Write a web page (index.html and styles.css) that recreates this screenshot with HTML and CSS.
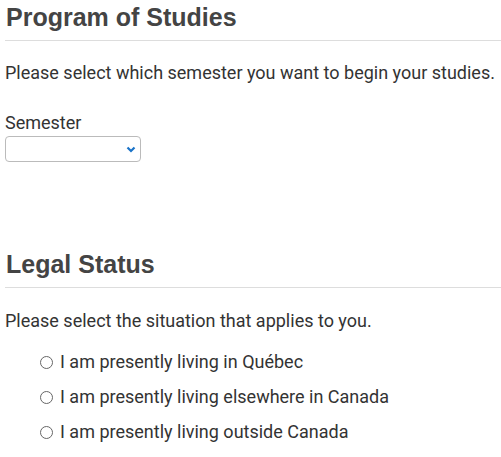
FILE: index.html
```html
<!DOCTYPE html>
<html>
<head>
<meta charset="utf-8">
<link rel="stylesheet" href="styles.css">
</head>
<body>
<section class="section">
  <h2 class="title">Program of Studies</h2>
  <p class="text">Please select which semester you want to begin your studies.</p>
  <div class="field">
    <label class="label">Semester</label>
    <div class="select">
      <svg class="chev" width="10" height="7" viewBox="0 0 10 7"><path d="M1.5 1.5 L5 5 L8.5 1.5" fill="none" stroke="#1a73c8" stroke-width="2.2"/></svg>
    </div>
  </div>
</section>
<section class="section second">
  <h2 class="title">Legal Status</h2>
  <p class="text text-b">Please select the situation that applies to you.</p>
  <ul class="options">
    <li class="option"><span class="radio"></span>I am presently living in Québec</li>
    <li class="option"><span class="radio"></span>I am presently living elsewhere in Canada</li>
    <li class="option"><span class="radio"></span>I am presently living outside Canada</li>
  </ul>
</section>
</body>
</html>
```
FILE: styles.css
```css
html, body { margin: 0; padding: 0; background: #fff; }
body { padding: 0 0 0 5px; font-family: Roboto, "Liberation Sans", sans-serif; color: #333; }
.section { display: block; }
.title {
  margin: 0;
  padding: 2px 0 8px 1px;
  font-family: "Liberation Sans", Arial, sans-serif;
  font-weight: bold;
  font-size: 25px;
  line-height: 30px;
  color: #444;
  border-bottom: 1px solid #ddd;
}
.text { margin: 20px 0 0 0; font-size: 18px; line-height: 24px; }
.text-b { margin-top: 21px; }
.field { margin-top: 26px; }
.label { display: block; font-size: 18px; line-height: 24px; }
.select {
  margin-top: 1px;
  width: 130px; height: 24px;
  border: 1px solid #bbb; border-radius: 4px;
  display: flex; align-items: center; justify-content: flex-end;
  padding-right: 4px; box-sizing: content-box;
}
.chev { display: block; }
.second { margin-top: 85px; }
.options { list-style: none; margin: 17px 0 0 0; padding: 0 0 0 35px; }
.option { display: flex; align-items: center; font-size: 18px; line-height: 24px; height: 24px; margin-bottom: 11px; }
.radio { width: 11px; height: 11px; border: 1px solid #666; border-radius: 50%; margin-right: 7px; }
```
